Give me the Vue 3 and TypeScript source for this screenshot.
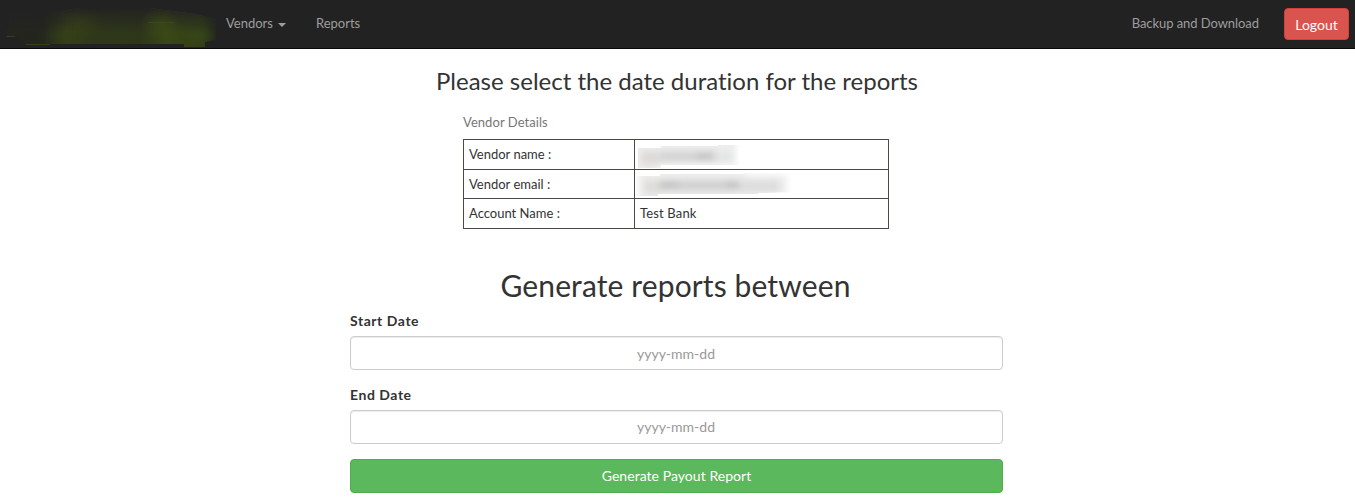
<script setup lang="ts">
import { ref } from 'vue'

interface DateField {
  id: string
  label: string
}

const fields: DateField[] = [
  { id: 'start', label: 'Start Date' },
  { id: 'end', label: 'End Date' },
]
const dates = ref<Record<string, string>>({ start: '', end: '' })
</script>

<template>
  <div class="page">
    <nav class="navbar">
      <svg class="brand" width="216" height="48" viewBox="0 0 216 48" aria-hidden="true">
        <defs>
          <linearGradient id="band" x1="0" y1="0" x2="1" y2="0">
            <stop offset="0" stop-color="#24261e" />
            <stop offset=".2" stop-color="#23251d" />
            <stop offset=".31" stop-color="#323c18" />
            <stop offset=".45" stop-color="#2e3819" />
            <stop offset=".65" stop-color="#2d3619" />
            <stop offset=".77" stop-color="#384516" />
            <stop offset=".94" stop-color="#333f18" />
            <stop offset="1" stop-color="#24271e" />
          </linearGradient>
          <linearGradient id="fade" x1="0" y1="0" x2="0" y2="1">
            <stop offset="0" stop-color="#222" />
            <stop offset="1" stop-color="#222" stop-opacity="0" />
          </linearGradient>
          <radialGradient id="glow">
            <stop offset="0" stop-color="#3e4f15" stop-opacity=".8" />
            <stop offset="1" stop-color="#3e4f15" stop-opacity="0" />
          </radialGradient>
          <clipPath id="smudge">
            <path d="M12 11H60L80 8H150L195 14L216 19V40L205 42V47H184V44H26L15 36L6 36Z" />
          </clipPath>
        </defs>
        <g clip-path="url(#smudge)">
          <rect width="216" height="48" fill="url(#band)" />
          <rect y="7" width="216" height="26" fill="url(#fade)" />
          <ellipse cx="80" cy="23" rx="24" ry="16" fill="url(#glow)" opacity=".35" />
          <ellipse cx="62" cy="36" rx="26" ry="13" fill="url(#glow)" opacity=".3" />
          <ellipse cx="160" cy="24" rx="20" ry="16" fill="url(#glow)" opacity=".6" />
          <ellipse cx="166" cy="32" rx="20" ry="14" fill="url(#glow)" opacity=".3" />
          <ellipse cx="198" cy="36" rx="18" ry="10" fill="url(#glow)" opacity=".4" />
        </g>
        <path d="M148 22.5H174M7 36.5H15M26 44.5H50" stroke="#40501a" opacity=".6" />
      </svg>
      <a class="link vendors">Vendors<span class="caret"></span></a>
      <a class="link reports">Reports</a>
      <a class="link backup">Backup and Download</a>
      <button class="logout" type="button">Logout</button>
    </nav>

    <main class="content">
      <h3 class="title">Please select the date duration for the reports</h3>
      <table class="details">
        <caption>Vendor Details</caption>
        <tbody>
          <tr>
            <td class="key">Vendor name :</td>
            <td class="value">
              <svg class="redacted" width="160" height="25" viewBox="0 0 160 25" aria-hidden="true">
                <defs>
                  <filter id="haze" x="-30%" y="-60%" width="160%" height="220%" color-interpolation-filters="sRGB">
                    <feGaussianBlur stdDeviation="3" />
                  </filter>
                  <clipPath id="nameShape">
                    <path d="M2 5H25V3H82V2H103V22H25V25H2Z" />
                  </clipPath>
                </defs>
                <g clip-path="url(#nameShape)">
                  <rect width="104" height="25" fill="#eeeeee" />
                  <g filter="url(#haze)">
                    <rect x="5" y="8" width="20" height="14" fill="#dddbd9" />
                    <rect x="25" y="8" width="55" height="11" fill="#d4d4d4" />
                    <rect x="61" y="10" width="14" height="6" fill="#c4c4c4" />
                    <rect x="80" y="8" width="16" height="12" fill="#e3e5e6" />
                    <rect x="100" y="-4" width="12" height="34" fill="#ffffff" />
                    <rect x="22" y="21" width="84" height="7" fill="#f8f8f8" />
                  </g>
                </g>
              </svg>
            </td>
          </tr>
          <tr>
            <td class="key">Vendor email :</td>
            <td class="value">
              <svg class="redacted" width="160" height="25" viewBox="0 0 160 25" aria-hidden="true">
                <defs>
                  <clipPath id="mailShape">
                    <path d="M0 4H24V2H108V1H158V20L122 21V22H22V24H0Z" />
                  </clipPath>
                </defs>
                <g clip-path="url(#mailShape)">
                  <rect width="160" height="25" fill="#eeeeee" />
                  <g filter="url(#haze)">
                    <rect x="8" y="8" width="16" height="14" fill="#dfdddb" />
                    <rect x="23" y="8" width="80" height="11" fill="#d1d1d1" />
                    <rect x="24" y="10" width="18" height="5" fill="#c2c2c2" />
                    <rect x="90" y="10" width="13" height="5" fill="#c2c2c2" />
                    <rect x="103" y="8" width="40" height="12" fill="#dddddd" />
                    <rect x="110" y="-5" width="50" height="8" fill="#ffffff" />
                    <rect x="151" y="-6" width="16" height="38" fill="#ffffff" />
                    <rect x="-6" y="-6" width="8" height="38" fill="#ffffff" />
                  </g>
                </g>
              </svg>
            </td>
          </tr>
          <tr>
            <td class="key">Account Name :</td>
            <td class="value">Test Bank</td>
          </tr>
        </tbody>
      </table>

      <form class="form" @submit.prevent>
        <h2 class="subtitle">Generate reports between</h2>
        <div v-for="field in fields" :key="field.id" class="group">
          <label :for="field.id">{{ field.label }}</label>
          <input :id="field.id" v-model="dates[field.id]" type="text" placeholder="yyyy-mm-dd" />
        </div>
        <button class="generate" type="submit">Generate Payout Report</button>
      </form>
    </main>
  </div>
</template>

<style>
body {
  margin: 0;
  background: #fff;
}
</style>

<style scoped>
.page,
.page * {
  box-sizing: border-box;
}

.page {
  height: 500px;
  overflow: hidden;
  font-family: Lato, sans-serif;
  font-size: 13px;
  line-height: 18.57px;
  font-variant-ligatures: none;
  color: #333;
}

.navbar {
  display: flex;
  align-items: flex-start;
  height: 49px;
  background: #222;
  border-bottom: 1px solid #080808;
}

.brand {
  flex: none;
}

.link {
  padding-top: 14px;
  color: #9d9d9d;
  white-space: nowrap;
}

.vendors {
  margin-left: 10px;
}

.caret {
  display: inline-block;
  margin-left: 5px;
  vertical-align: middle;
  border-top: 4px solid #9d9d9d;
  border-left: 4px solid transparent;
  border-right: 4px solid transparent;
}

.reports {
  margin-left: 30px;
}

.backup {
  margin-left: auto;
  margin-right: 25px;
  letter-spacing: -0.06px;
}

.logout,
.generate {
  padding: 0;
  border: 1px solid;
  border-radius: 4px;
  font-family: inherit;
  font-size: 14px;
  line-height: 20px;
  color: #fff;
}

.logout {
  width: 65px;
  height: 32px;
  margin: 8px 6px 0 0;
  padding-top: 2px;
  background: #d9534f;
  border-color: #d43f3a;
}

.content {
  display: flex;
  flex-direction: column;
  align-items: center;
}

.title {
  margin: 19px 1px 0 0;
  font-size: 24px;
  line-height: 26px;
  font-weight: 400;
}

.details {
  width: 426px;
  margin: 11px 3px 0 0;
  border-collapse: collapse;
  table-layout: fixed;
}

.details caption {
  height: 34px;
  padding: 8px 0;
  text-align: left;
  color: #777;
  letter-spacing: 0.06px;
}

.details td {
  height: 29.67px;
  padding: 0 5px;
  border: 1px solid #4a4a42;
}

.key {
  width: 171px;
}

.value {
  letter-spacing: 0.15px;
}

.redacted {
  display: block;
  margin: 2px 0 0 -4px;
}

.form {
  width: 653px;
  margin: 40px 2px 0 0;
}

.subtitle {
  margin: 0 2px 10px 0;
  font-size: 30px;
  line-height: 33px;
  font-weight: 400;
  letter-spacing: 0.12px;
  text-align: center;
}

.group {
  height: 58px;
}

.group + .group {
  margin-top: 16px;
}

.group label {
  display: block;
  height: 24px;
  font-size: 14px;
  font-weight: 700;
  letter-spacing: 0.55px;
}

.group input {
  display: block;
  width: 100%;
  height: 34px;
  padding: 7px 13px 5px 12px;
  border: 1px solid #ccc;
  border-radius: 4px;
  box-shadow: inset 0 1px 1px rgba(0, 0, 0, 0.075);
  font-family: inherit;
  font-size: 14px;
  text-align: center;
  color: #555;
  outline: none;
}

.group + .group input {
  padding-top: 6px;
  padding-bottom: 6px;
}

.group input::placeholder {
  color: #999;
  opacity: 1;
}

.generate {
  display: block;
  width: 100%;
  height: 34px;
  margin-top: 15px;
  letter-spacing: 0.05px;
  background: #5cb85c;
  border-color: #4cae4c;
}
</style>
